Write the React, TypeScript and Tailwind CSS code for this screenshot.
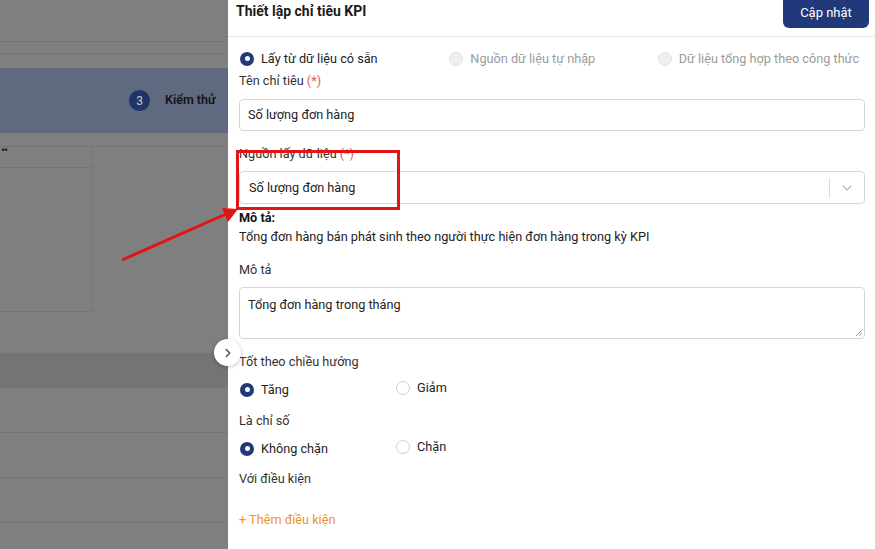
import { ChevronDown, ChevronRight } from "lucide-react";

type Opt = { label: string; checked?: boolean; disabled?: boolean };

function Radio({ label, checked, disabled }: Opt) {
  return (
    <div className="flex items-center gap-[7px]">
      {checked ? (
        <span className="flex h-[14px] w-[14px] items-center justify-center rounded-full bg-[#21397a]">
          <span className="h-[5px] w-[5px] rounded-full bg-white" />
        </span>
      ) : disabled ? (
        <span className="h-[14px] w-[14px] rounded-full border border-[#e2e2e2] bg-[#efefef]" />
      ) : (
        <span className="h-[14px] w-[14px] rounded-full border border-[#cfcfcf] bg-white" />
      )}
      <span className={disabled ? "text-[#9b9b9b]" : "text-[#222]"}>{label}</span>
    </div>
  );
}

function Label({ text, required }: { text: string; required?: boolean }) {
  return (
    <div className="h-[16px] leading-[16px] text-[#333]">
      {text}
      {required && <span className="text-[#e05a5a]"> (*)</span>}
    </div>
  );
}

export default function App() {
  return (
    <div
      className="relative h-[549px] w-[875px] overflow-hidden bg-[#7f7f7f] text-[12.7px]"
      style={{ fontFamily: "Roboto, 'Noto Sans', Arial, sans-serif" }}
    >
      {/* page behind the overlay */}
      <div className="flex flex-col">
        <div className="h-[42px] border-b border-[#747474]" />
        <div className="h-[12px] border-b border-[#747474]" />
        <div className="h-[14px]" />
        <div className="flex h-[65px] items-center bg-[#5f6a80] pl-[129px]">
          <span className="flex h-[21px] w-[21px] items-center justify-center rounded-full bg-[#1f3566] text-[12px] text-[#c3c8d3]">
            3
          </span>
          <span className="ml-[15px] text-[12.5px] font-semibold text-[#141414]">Kiểm thử</span>
        </div>
        <div className="h-[14px] border-b border-[#747474]" />
        <div className="flex h-[165px]">
          <div className="flex w-[93px] flex-col border-r border-b border-[#747474]">
            <div className="h-[21px] border-b border-[#747474] pl-[1px] text-[11px] leading-[8px] font-bold tracking-[-1px] text-[#222]">
              ••
            </div>
          </div>
        </div>
        <div className="h-[41px]" />
        <div className="h-[35px] border-t border-[#777] bg-[#737476]" />
        <div className="h-[45px] border-b border-[#747474]" />
        <div className="h-[45px] border-b border-[#747474]" />
        <div className="h-[45px] border-b border-[#747474]" />
      </div>

      {/* drawer */}
      <div className="absolute top-0 right-0 flex h-full w-[647px] flex-col bg-white">
        <div className="flex h-[37px] items-start justify-between border-b border-[#e6e6e6] pr-[6px] pl-[8px]">
          <div className="mt-[3px] text-[14px] leading-[16px] font-bold text-[#1b1b1b]">Thiết lập chỉ tiêu KPI</div>
          <button className="-mt-[5px] h-[33px] w-[86px] rounded-[6px] bg-[#21397a] pt-[3px] text-[13px] text-white">
            Cập nhật
          </button>
        </div>

        <div className="flex flex-col pr-[10px] pl-[11px]">
          <div className="mt-[12px] grid h-[16px] grid-cols-3 pl-[1px]">
            <Radio label="Lấy từ dữ liệu có sẵn" checked />
            <div className="pl-[1px]">
              <Radio label="Nguồn dữ liệu tự nhập" disabled />
            </div>
            <div className="pl-[1px]">
              <Radio label="Dữ liệu tổng hợp theo công thức" disabled />
            </div>
          </div>

          <div className="mt-[8px]">
            <Label text="Tên chỉ tiêu" required />
          </div>
          <div className="mt-[10px] flex h-[32px] items-center rounded-[4px] border border-[#d6d6d6] px-[8px] text-[#222]">
            Số lượng đơn hàng
          </div>

          <div className="mt-[15px]">
            <Label text="Nguồn lấy dữ liệu" required />
          </div>
          <div className="mt-[9px] flex h-[33px] items-center rounded-[4px] border border-[#d6d6d6] pl-[9px] text-[#222]">
            <span className="flex-1">Số lượng đơn hàng</span>
            <span className="h-[20px] w-px bg-[#d9d9d9]" />
            <ChevronDown className="mx-[9px] h-[16px] w-[16px] text-[#b5b5b5]" strokeWidth={1.6} />
          </div>

          <div className="mt-[6px] h-[16px] leading-[16px] font-bold text-[#111]">Mô tả:</div>
          <div className="mt-[3px] h-[16px] leading-[16px] text-[#222]">
            Tổng đơn hàng bán phát sinh theo người thực hiện đơn hàng trong kỳ KPI
          </div>

          <div className="mt-[17px]">
            <Label text="Mô tả" />
          </div>
          <div className="relative mt-[9px] h-[52px] rounded-[4px] border border-[#d6d6d6] px-[8px] pt-[7px] text-[#222]">
            Tổng đơn hàng trong tháng
            <svg className="absolute right-[1px] bottom-[1px]" width="8" height="8" viewBox="0 0 8 8">
              <path d="M7 1L1 7M7 4L4 7" stroke="#9a9a9a" strokeWidth="1" />
            </svg>
          </div>

          <div className="mt-[15px]">
            <Label text="Tốt theo chiều hướng" />
          </div>
          <div className="mt-[10px] flex h-[16px] pl-[1px]">
            <div className="w-[156px]">
              <Radio label="Tăng" checked />
            </div>
            <Radio label="Giảm" />
          </div>

          <div className="mt-[17px]">
            <Label text="Là chỉ số" />
          </div>
          <div className="mt-[10px] flex h-[16px] pl-[1px]">
            <div className="w-[156px]">
              <Radio label="Không chặn" checked />
            </div>
            <Radio label="Chặn" />
          </div>

          <div className="mt-[16px]">
            <Label text="Với điều kiện" />
          </div>
          <div className="mt-[25px] h-[16px] leading-[16px] text-[#f0922e]">+ Thêm điều kiện</div>
        </div>
      </div>

      {/* collapse handle */}
      <div className="absolute top-[339px] left-[214px] flex h-[27px] w-[27px] items-center justify-center rounded-full bg-white shadow-[0_1px_4px_rgba(0,0,0,0.25)]">
        <ChevronRight className="h-[14px] w-[14px] text-[#555]" strokeWidth={2.6} />
      </div>

      {/* annotation */}
      <div className="absolute top-[150px] left-[236px] h-[60px] w-[164px] border-[3px] border-[#e01515]" />
      <svg className="absolute top-0 left-0" width="875" height="549" viewBox="0 0 875 549">
        <line x1="122" y1="260" x2="226" y2="214" stroke="#e01515" strokeWidth="3" />
        <polygon points="238,209 222,208 228,222" fill="#e01515" />
      </svg>
    </div>
  );
}
